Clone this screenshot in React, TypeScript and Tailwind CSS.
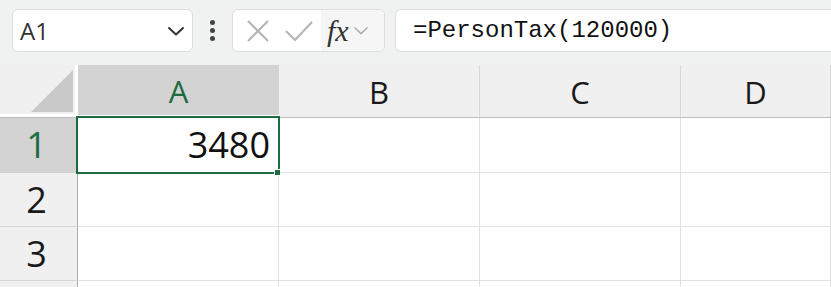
import React from "react";

const Chevron = ({ className = "", color = "#333", w = 18, h = 10, sw = 2 }: { className?: string; color?: string; w?: number; h?: number; sw?: number }) => (
  <svg width={w} height={h} viewBox="0 0 18 10" className={className}>
    <polyline points="2,2 9,8.5 16,2" fill="none" stroke={color} strokeWidth={sw} strokeLinecap="round" strokeLinejoin="round" />
  </svg>
);

const cols = ["A", "B", "C", "D"];
const colW = ["w-[201px]", "w-[201px]", "w-[201px]", "flex-1"];

export default function App() {
  const sans = { fontFamily: '"Open Sans", "Noto Sans", sans-serif' };
  return (
    <div className="w-[831px] h-[287px] overflow-hidden bg-white relative" style={sans}>
      {/* toolbar */}
      <div className="h-[65px] bg-[#f0f1f1] flex items-start pt-[9px] pl-[12px]">
        <div className="w-[181px] h-[43px] bg-white border border-[#dedede] rounded-[6px] flex items-center pl-[7px] pr-[7px] justify-between">
          <span className="text-[24px] text-[#333] leading-none">A1</span>
          <Chevron color="#333" w={18} h={10} sw={2} />
        </div>
        <div className="w-[39px] h-[43px] flex flex-col items-center justify-center gap-[3px]">
          <div className="w-[5px] h-[5px] rounded-full bg-[#444]" />
          <div className="w-[5px] h-[5px] rounded-full bg-[#444]" />
          <div className="w-[5px] h-[5px] rounded-full bg-[#444]" />
        </div>
        <div className="w-[153px] h-[43px] bg-white border border-[#dedede] rounded-[6px] flex items-center overflow-hidden">
          <div className="w-[44px] flex justify-center pl-[6px]">
            <svg width="24" height="24" viewBox="0 0 24 24">
              <line x1="2" y1="2" x2="22" y2="22" stroke="#b4b4b4" strokeWidth="2" />
              <line x1="22" y1="2" x2="2" y2="22" stroke="#b4b4b4" strokeWidth="2" />
            </svg>
          </div>
          <div className="w-[44px] flex justify-center">
            <svg width="30" height="24" viewBox="0 0 30 24">
              <polyline points="2,12 11,21 28,3" fill="none" stroke="#b4b4b4" strokeWidth="2" />
            </svg>
          </div>
          <div className="flex-1 h-full bg-[#f6f6f6] flex items-center pl-[6px] gap-[4px]">
            <span className="text-[30px] italic text-[#333] leading-none" style={{ fontFamily: '"Liberation Serif", "DejaVu Serif", serif' }}>
              fx
            </span>
            <Chevron color="#aaa" w={16} h={9} sw={1.6} />
          </div>
        </div>
        <div className="ml-[10px] flex-1 h-[43px] bg-white border border-[#dedede] border-r-0 rounded-l-[6px] flex items-center pl-[17px]">
          <span className="text-[24px] text-[#111] leading-none" style={{ fontFamily: '"Liberation Mono", "DejaVu Sans Mono", monospace' }}>
            =PersonTax(120000)
          </span>
        </div>
      </div>

      {/* grid */}
      <div className="relative">
        {/* header row */}
        <div className="flex h-[53px] bg-[#f0f0f0] border-b border-[#bdbdbd]">
          <div className="w-[78px] h-full border-r-[3px] border-white border-b-[3px] flex items-end justify-end pr-[2px] pb-[2px]">
            <svg width="42" height="42" viewBox="0 0 42 42">
              <polygon points="42,0 42,42 0,42" fill="#c9c9c9" />
            </svg>
          </div>
          {cols.map((c, i) => (
            <div
              key={c}
              className={`${colW[i]} h-full flex items-center justify-center text-[31px] ${
                i === 0 ? "bg-[#d3d3d3] text-[#1e6b41] border-b-[2px] border-white" : "text-[#1a1a1a] border-r border-[#d8d8d8]"
              }`}
            >
              <span className="leading-none pt-[2px]">{c}</span>
            </div>
          ))}
        </div>

        {[1, 2, 3, 4].map((r) => (
          <div key={r} className={`flex ${r === 1 ? "h-[55px]" : "h-[54px]"}`}>
            <div
              className={`w-[78px] h-full border-r border-[#ababab] border-b flex items-center justify-center text-[36px] ${
                r === 1 ? "bg-[#d3d3d3] text-[#1e6b41] border-b-[#d3d3d3]" : "bg-[#f0f0f0] text-[#1a1a1a] border-b-[#d6d6d6]"
              }`}
            >
              {r < 4 ? <span className="leading-none pr-[4px]">{r}</span> : null}
            </div>
            {cols.map((c, i) => (
              <div key={c} className={`${colW[i]} h-full border-r border-b border-[#e1e1e1] flex items-center justify-end pr-[8px]`}>
                {r === 1 && i === 0 ? <span className="text-[36px] text-[#111] leading-none">3480</span> : null}
              </div>
            ))}
          </div>
        ))}

        {/* selection overlay */}
        <div className="absolute left-[76px] top-[51px] w-[204px] h-[58px] border-2 border-[#1e6b41] pointer-events-none" />
        <div className="absolute left-[274px] top-[104px] w-[7px] h-[7px] bg-[#1e6b41] border border-white pointer-events-none" />
      </div>
    </div>
  );
}
